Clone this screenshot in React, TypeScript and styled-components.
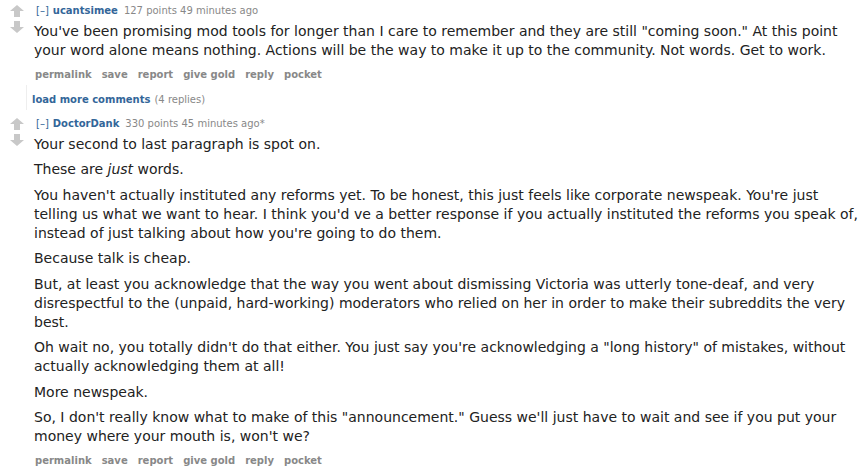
import React from 'react';
import styled, { createGlobalStyle } from 'styled-components';

interface IComment {
  author: string;
  points: number;
  age: string;
  edited?: boolean;
  paragraphs: React.ReactNode[];
}

// ! global
const GlobalStyle = createGlobalStyle`
  html, body {
    margin: 0;
    padding: 0;
    background: #fff;
  }
  body {
    font-family: "DejaVu Sans", Verdana, sans-serif;
    color: #222;
  }
`;

// ! styled components
const Page = styled.div`
  padding: 4px 0 0 0;
  width: 868px;
  overflow: hidden;
`;

const CommentRow = styled.div`
  display: flex;
  align-items: flex-start;
`;

const Votes = styled.div`
  display: flex;
  flex-direction: column;
  align-items: center;
  gap: 4px;
  width: 14px;
  margin: 1px 8px 0 10px;
  flex-shrink: 0;
`;

const Entry = styled.div`
  flex: 1;
  min-width: 0;
  margin-left: 2px;
`;

const Tagline = styled.div`
  font-size: 10px;
  color: #888;
  line-height: 14px;
  margin-left: 2px;
`;

const Toggle = styled.span`
  color: #369;
  margin-right: 4px;
`;

const Author = styled.span`
  color: #369;
  font-weight: bold;
  margin-right: 6px;
`;

const Body = styled.div`
  font-size: 14px;
  line-height: 19px;
  margin-top: 4px;
  padding-right: 2px;
`;

const Para = styled.p`
  margin: 0 0 6.5px 0;
`;

const Buttons = styled.ul`
  list-style: none;
  display: flex;
  gap: 10px;
  margin: 0;
  padding: 1px 0 0 1px;
`;

const Btn = styled.li`
  font-size: 10px;
  font-weight: bold;
  color: #888;
  line-height: 14px;
`;

const Child = styled.div`
  margin: 3px 0 7px 26px;
  border-left: 1px solid #eee;
  padding: 3px 0 3px 5px;
`;

const MoreLink = styled.span`
  font-size: 10px;
  font-weight: bold;
  color: #369;
`;

const Gray = styled.span`
  font-size: 10px;
  color: #888;
  margin-left: 4px;
`;

const Arrow = ({ down }: { down?: boolean }) => (
  <svg width="14" height="12" viewBox="0 0 14 12" style={down ? { transform: 'rotate(180deg)' } : undefined}>
    <path d="M7 0 L14 6 L10 6 L10 12 L4 12 L4 6 L0 6 Z" fill="#c8c8c8" />
  </svg>
);

const Comment = ({ author, points, age, edited, paragraphs }: IComment) => (
  <CommentRow>
    <Votes>
      <Arrow />
      <Arrow down />
    </Votes>
    <Entry>
      <Tagline>
        <Toggle>[–]</Toggle>
        <Author>{author}</Author>
        {points} points {age}
        {edited ? '*' : ''}
      </Tagline>
      <Body>
        {paragraphs.map((p, i) => (
          <Para key={i}>{p}</Para>
        ))}
      </Body>
      <Buttons>
        {['permalink', 'save', 'report', 'give gold', 'reply', 'pocket'].map((b) => (
          <Btn key={b}>{b}</Btn>
        ))}
      </Buttons>
    </Entry>
  </CommentRow>
);

const App = () => {
  return (
    <Page>
      <GlobalStyle />
      <Comment
        author="ucantsimee"
        points={127}
        age="49 minutes ago"
        paragraphs={[
          'You\'ve been promising mod tools for longer than I care to remember and they are still "coming soon." At this point your word alone means nothing. Actions will be the way to make it up to the community. Not words. Get to work.',
        ]}
      />
      <Child>
        <MoreLink>load more comments</MoreLink>
        <Gray>(4 replies)</Gray>
      </Child>
      <Comment
        author="DoctorDank"
        points={330}
        age="45 minutes ago"
        edited
        paragraphs={[
          'Your second to last paragraph is spot on.',
          <>
            These are <em>just</em> words.
          </>,
          "You haven't actually instituted any reforms yet. To be honest, this just feels like corporate newspeak. You're just telling us what we want to hear. I think you'd ve a better response if you actually instituted the reforms you speak of, instead of just talking about how you're going to do them.",
          'Because talk is cheap.',
          'But, at least you acknowledge that the way you went about dismissing Victoria was utterly tone-deaf, and very disrespectful to the (unpaid, hard-working) moderators who relied on her in order to make their subreddits the very best.',
          "Oh wait no, you totally didn't do that either. You just say you're acknowledging a \"long history\" of mistakes, without actually acknowledging them at all!",
          'More newspeak.',
          'So, I don\'t really know what to make of this "announcement." Guess we\'ll just have to wait and see if you put your money where your mouth is, won\'t we?',
        ]}
      />
    </Page>
  );
};

export default App;
